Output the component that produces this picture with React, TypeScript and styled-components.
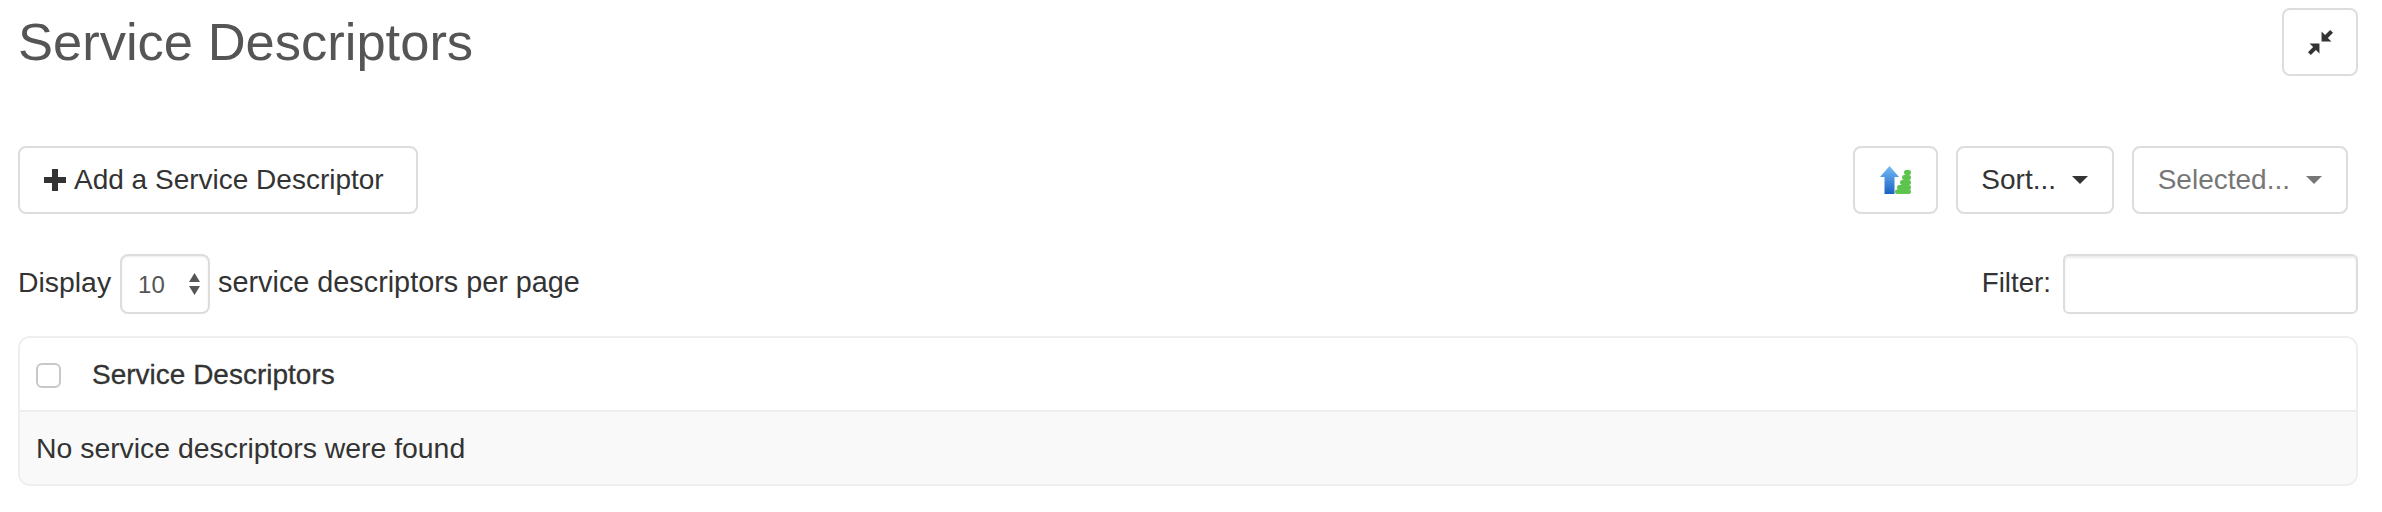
import React from "react";
import styled, { createGlobalStyle } from "styled-components";

const Global = createGlobalStyle`
  html, body { margin: 0; padding: 0; background: #fff; }
  body { font-family: "Liberation Sans", Arial, sans-serif; color: #333; font-size: 28px; }
`;

const Page = styled.div`
  padding: 0 24px 0 18px;
  display: flex;
  flex-direction: column;
`;

const Header = styled.header`
  display: flex;
  justify-content: space-between;
  align-items: flex-start;
  height: 146px;
  padding-top: 8px;
  box-sizing: border-box;
`;

const Title = styled.h1`
  margin: 6px 0 0;
  font-size: 52.5px;
  line-height: 56px;
  font-weight: 400;
  color: #555;
`;

const Button = styled.button<{ $muted?: boolean; $w?: number }>`
  box-sizing: border-box;
  display: inline-flex;
  align-items: center;
  justify-content: center;
  gap: 16px;
  height: 68px;
  padding: 0 24px;
  ${(p) => (p.$w ? `width: ${p.$w}px; padding: 0;` : "")}
  background: #fff;
  border: 2px solid #ddd;
  border-radius: 8px;
  font: inherit;
  font-size: 28px;
  color: ${(p) => (p.$muted ? "#777" : "#333")};
`;

const AddButton = styled(Button)`
  padding-right: 32px;
`;

const AddLabel = styled.span`
  margin-left: -8px;
`;

const Toolbar = styled.div`
  display: flex;
  justify-content: space-between;
  align-items: center;
  padding-right: 10px;
`;

const ToolGroup = styled.div`
  display: flex;
  gap: 18px;
`;

const Caret = styled.span<{ $muted?: boolean }>`
  width: 0;
  height: 0;
  border-left: 8px solid transparent;
  border-right: 8px solid transparent;
  border-top: 8px solid ${(p) => (p.$muted ? "#777" : "#333")};
`;

const ControlRow = styled.div`
  display: flex;
  justify-content: space-between;
  align-items: center;
  margin-top: 40px;
  height: 60px;
`;

const Inline = styled.label`
  display: flex;
  align-items: center;
  gap: 8px;
  color: #333;
`;

const FilterLabel = styled(Inline)`
  gap: 12px;
`;

const RowText = styled.span<{ $size?: number }>`
  padding-bottom: 3px;
  font-size: ${(p) => p.$size ?? 28}px;
`;

const DisplayText = styled(RowText)`
  margin-right: 1px;
`;

const SelectWrap = styled.span`
  position: relative;
  display: inline-flex;
`;

const PageSize = styled.select`
  appearance: none;
  box-sizing: border-box;
  width: 90px;
  height: 60px;
  padding: 0 0 0 16px;
  background: #fff;
  border: 2px solid #ddd;
  border-radius: 8px;
  box-shadow: inset 0 1px 2px rgba(0, 0, 0, 0.08);
  font: inherit;
  font-size: 24px;
  color: #555;
`;

const Spinner = styled.svg`
  position: absolute;
  right: 10px;
  top: 19px;
  pointer-events: none;
`;

const FilterInput = styled.input`
  box-sizing: border-box;
  width: 295px;
  height: 60px;
  border: 2px solid #ddd;
  border-radius: 6px;
  box-shadow: inset 0 2px 2px rgba(0, 0, 0, 0.075);
  background: #fff;
  outline: none;
`;

const Panel = styled.section`
  margin-top: 22px;
  border: 2px solid #eee;
  border-radius: 12px;
  overflow: hidden;
`;

const PanelHead = styled.div`
  display: flex;
  align-items: center;
  height: 72px;
  padding-left: 16px;
  gap: 31px;
  background: #fff;
  border-bottom: 2px solid #eee;
`;

const Check = styled.input`
  appearance: none;
  box-sizing: border-box;
  width: 25px;
  height: 25px;
  margin: 2px 0 0 0;
  background: #fff;
  border: 2px solid #c8c8c8;
  border-radius: 6px;
`;

const HeadText = styled.span`
  color: #333;
  padding-top: 1px;
  -webkit-text-stroke: 0.3px #333;
`;

const PanelBody = styled.div`
  display: flex;
  align-items: center;
  box-sizing: border-box;
  height: 72px;
  padding: 1px 0 0 16px;
  background: #f9f9f9;
  color: #333;
  font-size: 28.4px;
`;

const Plus = () => (
  <svg width="22" height="26" viewBox="0 0 22 26" fill="#333" aria-hidden="true">
    <path d="M8 2h6v8h8v6h-8v8H8v-8H0v-6h8z" />
  </svg>
);

const Compress = () => (
  <svg width="25" height="25" viewBox="0 0 24 24" fill="#333" aria-hidden="true">
    <path d="M13 1.5v9.5h9.5l-3.4-3.4L24 2.7 21.3 0l-4.9 4.9z" />
    <path d="M11 22.5V13H1.5l3.4 3.4L0 21.3 2.7 24l4.9-4.9z" />
  </svg>
);

const SortIcon = () => (
  <svg width="31" height="28" viewBox="0 0 31 28" aria-hidden="true">
    <defs>
      <linearGradient id="blueArrow" x1="0" y1="0" x2="0" y2="1">
        <stop offset="0" stopColor="#74bcf4" />
        <stop offset="1" stopColor="#1a62c4" />
      </linearGradient>
    </defs>
    <path d="M9.5 0L19 11h-4.5v17h-10V11H0z" fill="url(#blueArrow)" />
    <g fill="#5fc44d">
      <rect x="24" y="4" width="7" height="5" rx="2.2" />
      <rect x="22" y="9" width="9" height="5" rx="2.2" />
      <rect x="20" y="14" width="11" height="5" rx="2.2" />
      <rect x="17" y="19" width="14" height="5" rx="2.2" />
      <rect x="15" y="23.5" width="16" height="4.5" rx="2" />
    </g>
  </svg>
);

export default function App() {
  return (
    <Page>
      <Global />
      <Header>
        <Title>Service Descriptors</Title>
        <Button $w={76} aria-label="Collapse">
          <Compress />
        </Button>
      </Header>
      <Toolbar>
        <AddButton>
          <Plus />
          <AddLabel>Add a Service Descriptor</AddLabel>
        </AddButton>
        <ToolGroup>
          <Button $w={85} aria-label="Sort order">
            <SortIcon />
          </Button>
          <Button $w={158}>
            Sort...
            <Caret />
          </Button>
          <Button $muted>
            Selected...
            <Caret $muted />
          </Button>
        </ToolGroup>
      </Toolbar>
      <ControlRow>
        <Inline>
          <DisplayText $size={28.4}>Display</DisplayText>
          <SelectWrap>
            <PageSize defaultValue="10">
              <option>10</option>
              <option>25</option>
              <option>50</option>
            </PageSize>
            <Spinner width="11" height="22" viewBox="0 0 11 22" fill="#555">
              <path d="M5.5 0l5.5 9H0zM5.5 22l5.5-9H0z" />
            </Spinner>
          </SelectWrap>
          <RowText $size={28.8}>service descriptors per page</RowText>
        </Inline>
        <FilterLabel>
          <RowText $size={27.7}>Filter:</RowText>
          <FilterInput type="text" />
        </FilterLabel>
      </ControlRow>
      <Panel>
        <PanelHead>
          <Check type="checkbox" />
          <HeadText>Service Descriptors</HeadText>
        </PanelHead>
        <PanelBody>No service descriptors were found</PanelBody>
      </Panel>
    </Page>
  );
}
